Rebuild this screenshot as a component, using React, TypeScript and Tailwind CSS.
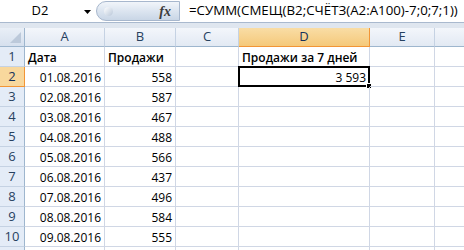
import React from 'react';

const columns = [
  { label: 'A', width: 80 },
  { label: 'B', width: 71 },
  { label: 'C', width: 63 },
  { label: 'D', width: 131 },
  { label: 'E', width: 65 },
  { label: '', width: 64 },
];

const sales: [string, string][] = [
  ['01.08.2016', '558'],
  ['02.08.2016', '587'],
  ['03.08.2016', '467'],
  ['04.08.2016', '488'],
  ['05.08.2016', '566'],
  ['06.08.2016', '437'],
  ['07.08.2016', '496'],
  ['08.08.2016', '584'],
  ['09.08.2016', '555'],
];

const cellFont = { fontFamily: '"Open Sans", "Liberation Sans", sans-serif' };

const FormulaBar = () => (
  <div className="flex h-[23px] border-b border-[#A9B9CE] bg-white">
    <div className="relative flex w-[96px] items-center">
      <span className="w-[80px] text-center text-[13px] text-black" style={cellFont}>D2</span>
      <svg className="absolute left-[84px] top-[10px]" width="7" height="4" viewBox="0 0 7 4">
        <path d="M0 0h7L3.5 4z" fill="#000" />
      </svg>
    </div>
    <div className="relative my-[1px] flex w-[84px] items-center justify-end rounded-l-[11px] border border-[#A7B7CD] bg-gradient-to-b from-[#F1F5FA] via-[#DCE5F0] to-[#C9D6E6] pr-[8px]">
      <div className="absolute left-[7px] top-[5px] h-[9px] w-[9px] rounded-full bg-gradient-to-br from-[#FFFFFF] to-[#B9C7D9]" />
      <span
        className="text-[14px] font-bold italic text-[#3B3B3B]"
        style={{ fontFamily: '"Liberation Serif", serif' }}
      >
        fx
      </span>
    </div>
    <div className="flex flex-1 items-center pl-[9px] text-[13.3px] text-black" style={cellFont}>
      =СУММ(СМЕЩ(B2;СЧЁТЗ(A2:A100)-7;0;7;1))
    </div>
  </div>
);

const HeaderRow = () => (
  <div className="flex h-[19px]">
    <div className="relative w-[25px] shrink-0 border-r border-b border-[#9EB6CE] bg-gradient-to-b from-[#E9EFF7] to-[#D6E0EE]">
      <svg className="absolute right-[3px] bottom-[3px]" width="11" height="11" viewBox="0 0 11 11">
        <path d="M11 0v11H0z" fill="#BCC9DA" />
      </svg>
    </div>
    {columns.map(col => {
      const active = col.label === 'D';
      return (
        <div
          key={col.width + col.label}
          style={{ width: col.width }}
          className={`flex shrink-0 items-center justify-center border-r border-b text-[13px] ${
            active
              ? 'border-[#F29536] bg-gradient-to-b from-[#F9DDA5] to-[#F5C97A] text-[#15325A]'
              : 'border-[#C5D2E3] border-b-[#9EB6CE] bg-gradient-to-b from-[#F3F6FB] to-[#E2E9F3] text-[#27415F]'
          }`}
        >
          <span style={cellFont}>{col.label}</span>
        </div>
      );
    })}
  </div>
);

const RowHeader = ({ n, active }: { n?: number; active: boolean }) => (
  <div
    className={`flex h-[20px] w-[25px] shrink-0 items-center justify-center border-r border-b pt-[1px] text-[13px] ${
      active
        ? 'border-[#F29536] bg-[#F8D89D] text-[#15325A]'
        : 'border-[#C5D2E3] border-r-[#9EB6CE] bg-[#E4ECF7] text-[#27415F]'
    }`}
    style={cellFont}
  >
    {n}
  </div>
);

const Cell = ({
  width,
  children,
  align = 'left',
  bold = false,
  selected = false,
}: {
  width: number;
  children?: React.ReactNode;
  align?: 'left' | 'right';
  bold?: boolean;
  selected?: boolean;
}) => (
  <div
    style={{ width, ...cellFont }}
    className={`relative h-[20px] shrink-0 whitespace-nowrap border-r border-b border-[#D0D7E5] px-[3px] pt-[2px] text-[12px] leading-[17px] text-black ${
      align === 'right' ? 'text-right' : 'text-left'
    } ${bold ? 'font-semibold' : ''}`}
  >
    {children}
    {selected && (
      <>
        <div className="absolute -left-[1px] -top-[1px] h-[21px] right-[-1px] border-2 border-black" />
        <div className="absolute -right-[3px] -bottom-[3px] h-[6px] w-[6px] border border-white bg-black" />
      </>
    )}
  </div>
);

export default function App() {
  const rows: React.ReactNode[][] = [
    [
      <Cell key="a" width={80} bold>Дата</Cell>,
      <Cell key="b" width={71} bold>Продажи</Cell>,
      <Cell key="c" width={63} />,
      <Cell key="d" width={131} bold>Продажи за 7 дней</Cell>,
      <Cell key="e" width={65} />,
      <Cell key="f" width={64} />,
    ],
  ];
  sales.forEach(([date, value], i) => {
    rows.push([
      <Cell key="a" width={80} align="right">{date}</Cell>,
      <Cell key="b" width={71} align="right">{value}</Cell>,
      <Cell key="c" width={63} />,
      i === 0 ? (
        <Cell key="d" width={131} align="right" selected>3 593</Cell>
      ) : (
        <Cell key="d" width={131} />
      ),
      <Cell key="e" width={65} />,
      <Cell key="f" width={64} />,
    ]);
  });
  // row 11 only peeks in at the bottom edge
  rows.push(columns.map(c => <Cell key={c.width + c.label} width={c.width} />));

  return (
    <div className="h-[250px] w-[464px] overflow-hidden bg-white">
      <FormulaBar />
      <div className="h-[5px] bg-[#DFE6EF]" />
      <HeaderRow />
      {rows.map((cells, i) => (
        <div key={i} className="flex">
          <RowHeader n={i < 10 ? i + 1 : undefined} active={i === 1} />
          {cells}
        </div>
      ))}
    </div>
  );
}
